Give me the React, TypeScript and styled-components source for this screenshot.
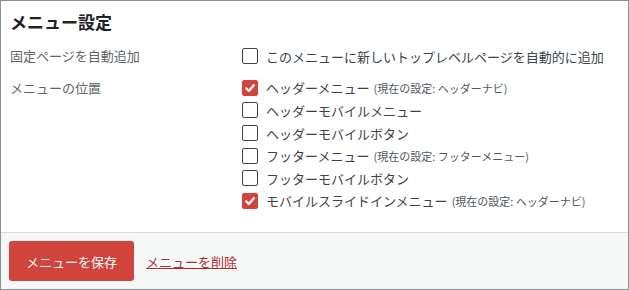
import styled, { createGlobalStyle } from "styled-components";

const GlobalStyle = createGlobalStyle`
  html, body {
    margin: 0;
    padding: 0;
    background: #fff;
  }
  body {
    font-family: "Noto Sans CJK JP", "Noto Sans", sans-serif;
  }
  * {
    box-sizing: border-box;
  }
`;

type Opt = { label: string; note?: string; checked: boolean };

const locations: Opt[] = [
  { label: "ヘッダーメニュー", note: "(現在の設定: ヘッダーナビ)", checked: true },
  { label: "ヘッダーモバイルメニュー", checked: false },
  { label: "ヘッダーモバイルボタン", checked: false },
  { label: "フッターメニュー", note: "(現在の設定: フッターメニュー)", checked: false },
  { label: "フッターモバイルボタン", checked: false },
  { label: "モバイルスライドインメニュー", note: "(現在の設定: ヘッダーナビ)", checked: true },
];

function Check({ checked }: { checked: boolean }) {
  return (
    <Box $checked={checked}>
      {checked && (
        <svg width="12" height="12" viewBox="0 0 12 12">
          <path d="M2.2 6.3 L4.8 8.9 L9.8 3.2" fill="none" stroke="#fff" strokeWidth="2.2" strokeLinecap="round" strokeLinejoin="round" />
        </svg>
      )}
    </Box>
  );
}

export default function App() {
  return (
    <>
      <GlobalStyle />
      <Panel>
        <Body>
          <Title>メニュー設定</Title>
          <Grid>
            <Label>固定ページを自動追加</Label>
            <Options>
              <Option>
                <Check checked={false} />
                <OptText>このメニューに新しいトップレベルページを自動的に追加</OptText>
              </Option>
            </Options>
            <Label>メニューの位置</Label>
            <Options>
              {locations.map((o) => (
                <Option key={o.label}>
                  <Check checked={o.checked} />
                  <OptText>
                    {o.label}
                    {o.note && <Note>{o.note}</Note>}
                  </OptText>
                </Option>
              ))}
            </Options>
          </Grid>
        </Body>
        <Footer>
          <SaveButton>メニューを保存</SaveButton>
          <DeleteLink href="#">メニューを削除</DeleteLink>
        </Footer>
      </Panel>
    </>
  );
}

const Panel = styled.div`
  width: 629px;
  height: 290px;
  border: 1px solid #8c8f94;
  display: flex;
  flex-direction: column;
  background: #fff;
`;

const Body = styled.div`
  flex: 1;
  padding: 9px 9px 0 9px;
`;

const Title = styled.h2`
  margin: 0;
  font-size: 17px;
  line-height: 24px;
  font-weight: 700;
  color: #1d2327;
`;

const Grid = styled.div`
  display: grid;
  grid-template-columns: 231px 1fr;
  row-gap: 9px;
  margin-top: 11px;
`;

const Label = styled.div`
  font-size: 13px;
  line-height: 22.6px;
  color: #5f656b;
`;

const Options = styled.div`
  display: flex;
  flex-direction: column;
`;

const Option = styled.label`
  display: flex;
  align-items: center;
  height: 22.6px;
`;

const Box = styled.span<{ $checked: boolean }>`
  width: 16px;
  height: 16px;
  flex: none;
  border-radius: 2px;
  margin-left: 1px;
  display: flex;
  align-items: center;
  justify-content: center;
  border: 1px solid ${(p) => (p.$checked ? "#d0443c" : "#3c434a")};
  background: ${(p) => (p.$checked ? "#d0443c" : "#fff")};
`;

const OptText = styled.span`
  margin-left: 8px;
  font-size: 13px;
  color: #3c434a;
  white-space: nowrap;
`;

const Note = styled.span`
  font-size: 11px;
  margin-left: 4px;
  color: #50575e;
`;

const Footer = styled.div`
  height: 57px;
  border-top: 1px solid #dcdcde;
  background: #f6f7f7;
  display: flex;
  align-items: center;
  padding: 0 8px;
  gap: 12px;
`;

const SaveButton = styled.button`
  width: 125px;
  height: 40px;
  border: none;
  border-radius: 3px;
  background: #d0443c;
  color: #fff;
  font-family: inherit;
  font-size: 13px;
  cursor: pointer;
`;

const DeleteLink = styled.a`
  font-size: 13px;
  color: #b32d2e;
  text-decoration: underline;
`;
